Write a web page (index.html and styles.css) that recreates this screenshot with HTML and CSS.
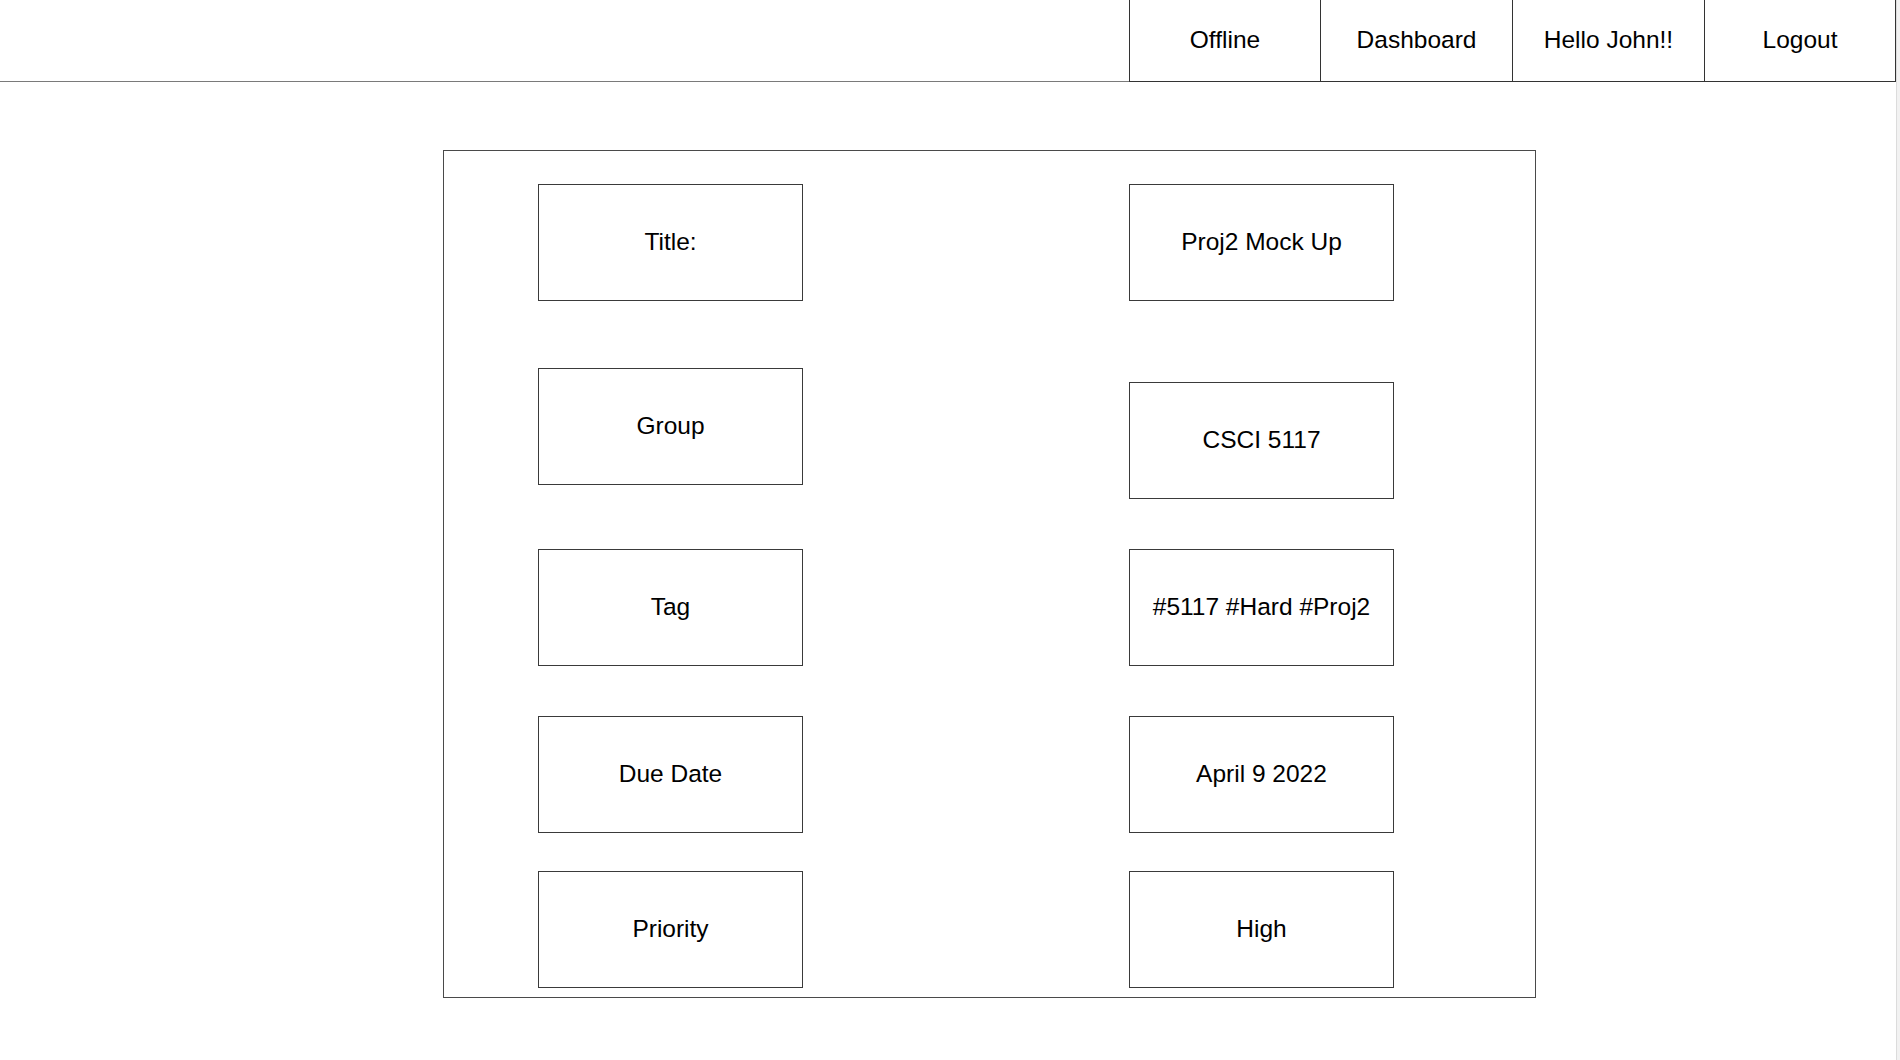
FILE: index.html
```html
<!DOCTYPE html>
<html lang="en">
<head>
<meta charset="utf-8">
<title>Task Detail</title>
<link rel="stylesheet" href="styles.css">
</head>
<body>
<header class="topbar">
  <nav class="nav">
    <div class="nav-item nav-first">Offline</div>
    <div class="nav-item">Dashboard</div>
    <div class="nav-item">Hello John!!</div>
    <div class="nav-item nav-last">Logout</div>
  </nav>
</header>
<main class="card">
  <div class="grid">
    <div class="box">Title:</div>
    <div class="box">Proj2 Mock Up</div>
    <div class="box">Group</div>
    <div class="box box-shift">CSCI 5117</div>
    <div class="box">Tag</div>
    <div class="box">#5117 #Hard #Proj2</div>
    <div class="box">Due Date</div>
    <div class="box">April 9 2022</div>
    <div class="box">Priority</div>
    <div class="box">High</div>
  </div>
</main>
<div class="scrolltrack"></div>
</body>
</html>
```
FILE: styles.css
```css
html, body {
  margin: 0;
  padding: 0;
  background: #ffffff;
}
body {
  font-family: "Liberation Sans", Arial, Helvetica, sans-serif;
  color: #000;
  width: 1900px;
  height: 1060px;
  overflow: hidden;
}
.topbar {
  display: flex;
  justify-content: flex-end;
  align-items: flex-start;
  padding-right: 4px;
  border-bottom: 1px solid #7a7a7a;
}
.nav {
  display: flex;
  margin-bottom: -1px;
  border-bottom: 1px solid #333;
}
.nav-item {
  box-sizing: border-box;
  width: 192px;
  height: 81px;
  border-left: 1px solid #333;
  display: flex;
  align-items: center;
  justify-content: center;
  font-size: 24.5px;
  padding-bottom: 1px;
}
.nav-item.nav-first {
  width: 191px;
}
.nav-item.nav-last {
  border-right: 1px solid #333;
}
.card {
  box-sizing: border-box;
  width: 1093px;
  height: 848px;
  margin: 68px 0 0 443px;
  border: 1px solid #4a4a4a;
  padding: 33px 0 0 94px;
}
.grid {
  display: grid;
  grid-template-columns: 265px 265px;
  column-gap: 326px;
  grid-template-rows: 184px 181px 167px 155px 117px;
}
.box {
  box-sizing: border-box;
  height: 117px;
  border: 1px solid #3a3a3a;
  display: flex;
  align-items: center;
  justify-content: center;
  font-size: 24.5px;
  padding-bottom: 2px;
  align-self: start;
}
.box-shift {
  margin-top: 14px;
}
.scrolltrack {
  position: fixed;
  top: 0;
  right: 0;
  width: 3px;
  height: 100%;
  background: #f2f2f2;
  border-left: 1px solid #dcdcdc;
}
```
